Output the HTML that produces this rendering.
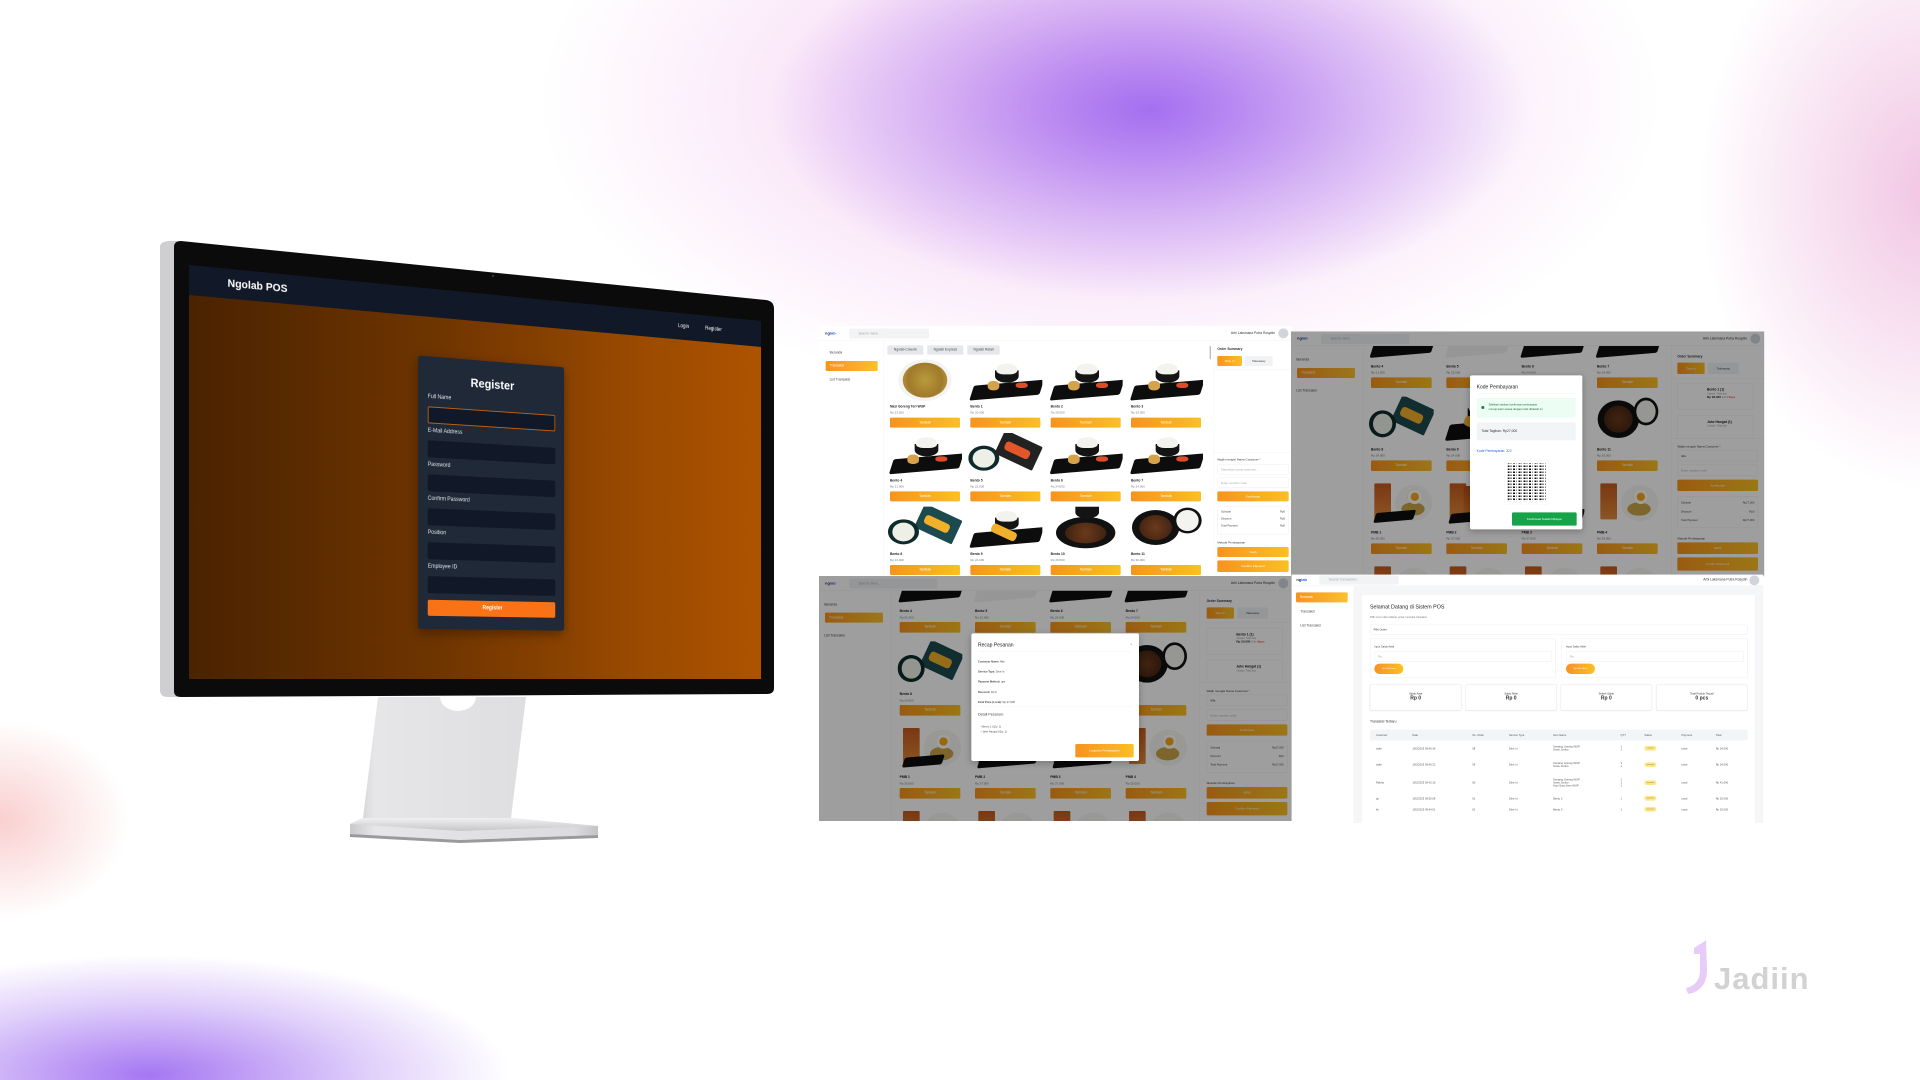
<!DOCTYPE html>
<html><head><meta charset="utf-8">
<style>
*{box-sizing:border-box;margin:0;padding:0}
body{width:1920px;height:1080px;overflow:hidden;background:#fff;position:relative;font-family:"Liberation Sans",sans-serif}
.abs{position:absolute}
.scr{position:absolute;left:189px;top:265px;width:680px;height:414px;perspective:1000px;perspective-origin:0 414px}
.scr .in{position:absolute;left:0;top:0;width:680px;height:414px;transform-origin:0 100%;transform:rotateY(13.3deg);background:linear-gradient(90deg,#4a2300,#6f3500 40%,#9a4a00 75%,#ad5300);overflow:hidden}
.nav{position:absolute;left:0;top:0;width:100%;height:30px;background:#111827;color:#fff}
.form{position:absolute;left:249px;top:72px;width:174px;height:289px;background:#1f2937;border-radius:3px;box-shadow:0 4px 12px rgba(0,0,0,.35)}
.form h2{position:absolute;top:17px;width:100%;text-align:center;color:#fff;font-size:13px;font-weight:bold}
.form .lb{position:absolute;left:11px;color:#e5e7eb;font-size:6px}
.form .ip{position:absolute;left:11px;width:152px;height:18px;background:#111827;border-radius:2px}
.form .bt{position:absolute;left:11px;width:152px;height:17px;top:258px;background:#f97316;border-radius:2px;color:#fff;font-size:6px;font-weight:bold;text-align:center;line-height:17px}
.pnl{position:absolute;width:1425px;height:750px;transform:scale(.33333);transform-origin:0 0;overflow:hidden}
.w{position:absolute;background:#fff;overflow:hidden;font-size:10px;color:#333}
.hd{position:absolute;left:0;top:0;right:0;height:44px;background:#fff;border-bottom:1px solid #eee;z-index:3}
.logo{position:absolute;left:18px;top:14px;font-size:12px;font-weight:bold;color:#1f2937}
.logo b{color:#2563eb}
.srch{position:absolute;left:90px;top:8px;width:240px;height:30px;background:#f1f3f5;border-radius:6px;color:#aaa;font-size:10px;line-height:30px;padding-left:28px}
.usr{position:absolute;right:52px;top:16px;font-size:10px;color:#333}
.av{position:absolute;right:12px;top:7px;width:30px;height:30px;border-radius:50%;background:#d1d5db}
.sb{position:absolute;left:0;top:44px;bottom:0;border-right:1px solid #eee;background:#fff}
.si{position:absolute;left:16px;font-size:10px;color:#444}
.sa{position:absolute;left:20px;height:30px;border-radius:4px;background:linear-gradient(90deg,#f7931e,#fbc02d);color:#fff;font-size:10px;line-height:30px;padding-left:12px}
.og{background:linear-gradient(90deg,#f7931e,#fbbf24);color:#fff;text-align:center;border-radius:4px}
.grid{position:absolute;display:grid}
.card{position:relative}
.card .im{position:absolute;left:0;right:0;top:0;overflow:hidden}
.card .nm{position:absolute;left:6px;font-size:10px;font-weight:bold;color:#222}
.card .pr{position:absolute;left:6px;font-size:9px;color:#777}
.card .bt{position:absolute;left:6px;right:6px;height:30px;line-height:30px;font-size:10px}
.im i{position:absolute;display:block}
.pl{left:6%;right:2%;bottom:8%;height:36%;background:#0d0d0d;transform:skewX(-22deg) rotate(-5deg);border-radius:6px}
.bw{left:36%;width:32%;top:26%;height:30%;background:#141414;border-radius:0 0 50% 50%}
.rc{left:38%;width:28%;top:10%;height:26%;background:#f2f2ee;border-radius:50% 50% 35% 35%}
.f1{left:26%;width:16%;top:52%;height:22%;background:#d6a24a;border-radius:40%}
.f2{left:64%;width:16%;top:56%;height:13%;background:#dc4e2a;border-radius:40%}
.np{left:14%;width:72%;top:0;height:100%;background:#f3f3f1;border-radius:50%}
.ng{left:20%;width:60%;top:8%;height:84%;background:radial-gradient(circle,#b99a3c,#a07a2c 60%,#caa94a);border-radius:50%}
.rb{left:0;width:42%;top:30%;height:60%;background:#0e2a2a;border-radius:50%}
.rr{left:6%;width:30%;top:38%;height:45%;background:#eef0e8;border-radius:50%}
.tl{left:40%;width:56%;top:10%;height:62%;background:#1d4a4e;transform:rotate(25deg);border-radius:4px}
.fy{left:48%;width:36%;top:30%;height:22%;background:#f1b02a;transform:rotate(25deg);border-radius:10px}
.dp{left:4%;width:64%;top:8%;height:84%;background:#111;border-radius:50%}
.dm{left:14%;width:44%;top:20%;height:60%;background:radial-gradient(circle,#6b3a1c,#3a1f10);border-radius:50%}
.dr{left:60%;width:38%;top:2%;height:62%;background:#111;border-radius:50%}
.dw{left:64%;width:30%;top:8%;height:50%;background:#f3f3f0;border-radius:50%}
.gl{left:8%;width:26%;top:8%;height:80%;background:linear-gradient(#c55a1e,#e08a3a);border-radius:3px}
.g2{left:30%;width:22%;top:14%;height:74%;background:linear-gradient(#b84f18,#d97c30);border-radius:3px}
.wp{left:40%;width:58%;top:12%;height:80%;background:#f5f5f3;border-radius:50%}
.eg{left:60%;width:22%;top:22%;height:32%;background:#fff;border-radius:50%;box-shadow:inset 0 0 0 9px #fff,inset 0 0 0 30px #f3a81c}
.ry{left:50%;width:36%;top:50%;height:30%;background:#c9a548;border-radius:50%}
.ov{position:absolute;left:0;top:0;right:0;bottom:0;background:rgba(0,0,0,.38);z-index:5}
.mod{position:absolute;background:#fff;border-radius:6px;z-index:6;box-shadow:0 6px 20px rgba(0,0,0,.25)}
.rp{position:absolute;left:1142px;top:44px;right:0;bottom:0;border-left:1px solid #eee;background:#fff}
.rp .t{position:absolute;font-size:10px;color:#333}
.inp{position:absolute;border:1px solid #e5e7eb;border-radius:4px;background:#fff;color:#aaa;font-size:9px;padding-left:10px}
.gb{background:#f1f2f4;color:#444;text-align:center;border-radius:4px}
.tbl td,.tbl th{font-size:8px;color:#555;text-align:left;font-weight:normal;padding:0 0 0 18px}
.pill{display:inline-block;background:#fde68a;border-radius:8px;width:36px;height:14px;font-size:6px;line-height:14px;text-align:center;color:#8a6d00}
</style></head><body>

<!-- background blobs -->
<div class="abs" style="left:0;top:0;width:1920px;height:1080px;background:
radial-gradient(ellipse 380px 190px at 1150px 110px,rgba(150,95,240,.85),rgba(150,95,240,.35) 55%,rgba(150,95,240,0) 100%),
radial-gradient(ellipse 560px 300px at 1100px 100px,rgba(235,160,230,.55),rgba(235,160,230,0) 100%),
radial-gradient(ellipse 230px 300px at 1930px 190px,rgba(232,160,210,.6),rgba(232,160,210,0) 100%),
radial-gradient(ellipse 360px 120px at 150px 1075px,rgba(150,95,240,.85),rgba(150,95,240,.3) 60%,rgba(150,95,240,0) 100%),
radial-gradient(ellipse 130px 100px at 0px 820px,rgba(245,160,160,.5),rgba(245,160,160,0) 100%)"></div>

<!-- monitor -->
<svg class="abs" style="left:0;top:0" width="1920" height="1080">
<defs>
<linearGradient id="nk" x1="0" x2="1"><stop offset="0" stop-color="#c9c9cb"/><stop offset=".1" stop-color="#e6e6e8"/><stop offset=".9" stop-color="#dcdcde"/><stop offset="1" stop-color="#c4c4c6"/></linearGradient>
<linearGradient id="bs" x1="0" y1="0" x2="0" y2="1"><stop offset="0" stop-color="#f0f0f2"/><stop offset="1" stop-color="#c6c6c8"/></linearGradient>
</defs>
<path d="M378 697 L526 697 L511 818 L598 826 L598 835 L460 840 L350 834 L350 824 L363 818 Z" fill="url(#nk)"/>
<path d="M350 824 L363 818 L511 818 L598 826 L460 831 Z" fill="url(#bs)"/>
<path d="M350 834 L460 840 L598 835 L598 838 L460 843 L350 837Z" fill="#9a9a9c"/>
<path d="M440 697 A18 14 0 0 0 476 697 Z" fill="#fff"/>
<path d="M160 247 Q160 242 168 241 L178 241 L178 697 L168 697 Q160 697 160 690 Z" fill="#cfcfd1"/>
<path d="M174 247 Q174 241 181 241 L766 300 Q774 301 774 309 L774 688 Q774 694 767 694 L181 697 Q174 697 174 691 Z" fill="#0b0b0b"/>
<circle cx="493" cy="276" r="1.2" fill="#333"/>
</svg>
<div class="scr"><div class="in">
 <div class="nav">
  <div class="abs" style="left:40px;top:9px;font-size:11px;font-weight:bold">Ngolab POS</div>
  <div class="abs" style="left:568px;top:12px;font-size:6px">Login</div>
  <div class="abs" style="left:604px;top:12px;font-size:6px">Register</div>
 </div>
 <div class="form">
  <h2>Register</h2>
  <div class="lb" style="top:40px">Full Name</div><div class="ip" style="top:53px;border:1px solid #c2620f"></div>
  <div class="lb" style="top:76px">E-Mail Address</div><div class="ip" style="top:89px"></div>
  <div class="lb" style="top:112px">Password</div><div class="ip" style="top:125px"></div>
  <div class="lb" style="top:148px">Confirm Password</div><div class="ip" style="top:161px"></div>
  <div class="lb" style="top:184px">Position</div><div class="ip" style="top:197px"></div>
  <div class="lb" style="top:220px">Employee ID</div><div class="ip" style="top:233px"></div>
  <div class="bt">Register</div>
 </div>
</div></div>

<!-- PANEL TL -->
<div class="pnl" style="left:818px;top:326px">
<div class="w" style="left:3px;top:0;width:1420px;height:750px">
 <div class="hd"><div class="logo">ng<b>lab</b></div><div class="srch">Search menu...</div><div class="usr">Arbi Laksmana Putra Rosydin</div><div class="av"></div></div>
 <div class="sb" style="width:195px"><div class="si" style="left:32px;top:30px">Beranda</div><div class="sa" style="top:61px;width:156px">Transaksi</div><div class="si" style="left:32px;top:112px">List Transaksi</div></div>
 <div class="gb abs" style="left:205px;top:58px;width:108px;height:28px;line-height:28px;background:#e5e7eb">Ngolab Cowork</div>
 <div class="gb abs" style="left:325px;top:58px;width:108px;height:28px;line-height:28px;background:#e5e7eb">Ngolab Express</div>
 <div class="gb abs" style="left:445px;top:58px;width:97px;height:28px;line-height:28px;background:#e5e7eb">Ngolab Retail</div>
 <div class="grid" style="left:207px;top:100px;grid-template-columns:repeat(4,222px);column-gap:19px;grid-auto-rows:221px">
  <div class="card"><div class="im" style="height:125px"><i class="np"></i><i class="ng"></i></div><div class="nm" style="top:137px">Nasi Goreng Teri WUP</div><div class="pr" style="top:155px">Rp 23.500</div><div class="bt og" style="top:175px">Tambah</div></div>
  <div class="card"><div class="im" style="height:125px"><i class="pl"></i><i class="bw"></i><i class="rc"></i><i class="f1"></i><i class="f2"></i></div><div class="nm" style="top:137px">Bento 1</div><div class="pr" style="top:155px">Rp 20.000</div><div class="bt og" style="top:175px">Tambah</div></div>
  <div class="card"><div class="im" style="height:125px"><i class="pl"></i><i class="bw"></i><i class="rc"></i><i class="f1"></i><i class="f2"></i></div><div class="nm" style="top:137px">Bento 2</div><div class="pr" style="top:155px">Rp 20.000</div><div class="bt og" style="top:175px">Tambah</div></div>
  <div class="card"><div class="im" style="height:125px"><i class="pl"></i><i class="bw"></i><i class="rc"></i><i class="f1"></i><i class="f2"></i></div><div class="nm" style="top:137px">Bento 3</div><div class="pr" style="top:155px">Rp 20.000</div><div class="bt og" style="top:175px">Tambah</div></div>
  <div class="card"><div class="im" style="height:125px"><i class="pl"></i><i class="bw"></i><i class="rc"></i><i class="f1"></i><i class="f2"></i></div><div class="nm" style="top:137px">Bento 4</div><div class="pr" style="top:155px">Rp 21.000</div><div class="bt og" style="top:175px">Tambah</div></div>
  <div class="card"><div class="im" style="height:125px"><i class="rb"></i><i class="rr"></i><i class="tl" style="background:#222"></i><i class="fy" style="background:#e2562a"></i></div><div class="nm" style="top:137px">Bento 5</div><div class="pr" style="top:155px">Rp 22.000</div><div class="bt og" style="top:175px">Tambah</div></div>
  <div class="card"><div class="im" style="height:125px"><i class="pl"></i><i class="bw"></i><i class="rc"></i><i class="f1"></i><i class="f2"></i></div><div class="nm" style="top:137px">Bento 6</div><div class="pr" style="top:155px">Rp 24.000</div><div class="bt og" style="top:175px">Tambah</div></div>
  <div class="card"><div class="im" style="height:125px"><i class="pl"></i><i class="bw"></i><i class="rc"></i><i class="f1"></i><i class="f2"></i></div><div class="nm" style="top:137px">Bento 7</div><div class="pr" style="top:155px">Rp 24.000</div><div class="bt og" style="top:175px">Tambah</div></div>
  <div class="card"><div class="im" style="height:125px"><i class="tl"></i><i class="fy"></i><i class="rb"></i><i class="rr"></i></div><div class="nm" style="top:137px">Bento 8</div><div class="pr" style="top:155px">Rp 24.000</div><div class="bt og" style="top:175px">Tambah</div></div>
  <div class="card"><div class="im" style="height:125px"><i class="pl"></i><i class="bw"></i><i class="rc"></i><i class="fy" style="left:30%;top:50%"></i></div><div class="nm" style="top:137px">Bento 9</div><div class="pr" style="top:155px">Rp 24.000</div><div class="bt og" style="top:175px">Tambah</div></div>
  <div class="card"><div class="im" style="height:125px"><i class="dp" style="left:10%;width:80%;top:25%;height:75%"></i><i class="dm" style="left:22%;width:56%;top:38%;height:50%"></i><i class="bw" style="top:0;height:28%"></i></div><div class="nm" style="top:137px">Bento 10</div><div class="pr" style="top:155px">Rp 26.500</div><div class="bt og" style="top:175px">Tambah</div></div>
  <div class="card"><div class="im" style="height:125px"><i class="dp"></i><i class="dm"></i><i class="dr"></i><i class="dw"></i></div><div class="nm" style="top:137px">Bento 11</div><div class="pr" style="top:155px">Rp 30.000</div><div class="bt og" style="top:175px">Tambah</div></div>
 </div>
 <div class="abs" style="left:1172px;top:60px;width:4px;height:40px;background:#bbb;border-radius:2px"></div>
 <div class="rp" style="left:1182px">
  <div class="t" style="left:12px;top:20px;font-weight:bold">Order Summary</div>
  <div class="abs og" style="left:12px;top:46px;width:74px;height:30px;line-height:30px;font-size:9px">Dine In</div>
  <div class="abs gb" style="left:94px;top:46px;width:84px;height:30px;line-height:30px;font-size:9px">Takeaway</div>
  <div class="abs" style="left:0;right:0;top:86px;border-top:1px solid #eee"></div>
  <div class="abs" style="left:0;right:0;top:336px;border-top:1px solid #eee"></div>
  <div class="t" style="left:12px;top:352px;font-size:9px">Wajib mengisi Nama Customer <span style="color:#e11">*</span></div>
  <div class="inp" style="left:12px;top:371px;width:214px;height:30px;line-height:30px">Masukkan nama customer...</div>
  <div class="inp" style="left:12px;top:411px;width:214px;height:30px;line-height:30px">Enter voucher code</div>
  <div class="abs og" style="left:12px;top:452px;width:214px;height:30px;line-height:30px;font-size:9px">Konfirmasi</div>
  <div class="inp" style="left:12px;top:496px;width:214px;height:85px;color:#444;font-size:8px;line-height:21px;padding:6px 10px">Subtotal<span style="float:right">Rp0</span><br>Discount<span style="float:right">Rp0</span><br>Total Payment<span style="float:right">Rp0</span></div>
  <div class="t" style="left:12px;top:600px;font-size:9px">Metode Pembayaran</div>
  <div class="abs og" style="left:12px;top:619px;width:214px;height:30px;line-height:30px;font-size:9px">Cash</div>
  <div class="abs og" style="left:12px;top:659px;width:214px;height:35px;line-height:35px;font-size:9px">Confirm Payment</div>
 </div>
</div></div>

<!-- PANEL TR -->
<div class="pnl" style="left:1290px;top:328px">
<div class="w" style="left:3px;top:10px;width:1420px;height:735px">
 <div class="hd"><div class="logo">ng<b>lab</b></div><div class="srch" style="width:265px">Search menu...</div><div class="usr">Arbi Laksmana Putra Rosydin</div><div class="av"></div></div>
 <div class="sb" style="width:218px"><div class="si" style="top:36px">Beranda</div><div class="sa" style="left:18px;top:66px;width:174px">Transaksi</div><div class="si" style="top:129px">List Transaksi</div></div>
 <div class="grid" style="left:234px;top:-53px;grid-template-columns:repeat(4,194px);column-gap:32px;grid-auto-rows:249px">
  <div class="card"><div class="im" style="height:135px"><i class="pl"></i></div><div class="nm" style="top:153px">Bento 4</div><div class="pr" style="top:172px">Rp 21.000</div><div class="bt og" style="top:191px;height:32px">Tambah</div></div>
  <div class="card"><div class="im" style="height:135px"><i class="pl" style="background:#f3f3f3"></i></div><div class="nm" style="top:153px">Bento 5</div><div class="pr" style="top:172px">Rp 22.000</div><div class="bt og" style="top:191px;height:32px">Tambah</div></div>
  <div class="card"><div class="im" style="height:135px"><i class="pl"></i></div><div class="nm" style="top:153px">Bento 6</div><div class="pr" style="top:172px">Rp 24.000</div><div class="bt og" style="top:191px;height:32px">Tambah</div></div>
  <div class="card"><div class="im" style="height:135px"><i class="pl"></i></div><div class="nm" style="top:153px">Bento 7</div><div class="pr" style="top:172px">Rp 24.000</div><div class="bt og" style="top:191px;height:32px">Tambah</div></div>
  <div class="card"><div class="im" style="height:135px"><i class="tl"></i><i class="fy"></i><i class="rb"></i><i class="rr"></i></div><div class="nm" style="top:153px">Bento 8</div><div class="pr" style="top:172px">Rp 24.000</div><div class="bt og" style="top:191px;height:32px">Tambah</div></div>
  <div class="card"><div class="im" style="height:135px"><i class="pl"></i><i class="bw"></i><i class="rc"></i><i class="fy" style="left:30%;top:50%"></i></div><div class="nm" style="top:153px">Bento 9</div><div class="pr" style="top:172px">Rp 24.000</div><div class="bt og" style="top:191px;height:32px">Tambah</div></div>
  <div class="card"><div class="im" style="height:135px"><i class="dp" style="left:10%;width:80%;top:25%;height:75%"></i><i class="dm" style="left:22%;width:56%;top:38%;height:50%"></i></div><div class="nm" style="top:153px">Bento 10</div><div class="pr" style="top:172px">Rp 26.500</div><div class="bt og" style="top:191px;height:32px">Tambah</div></div>
  <div class="card"><div class="im" style="height:135px"><i class="dp"></i><i class="dm"></i><i class="dr"></i><i class="dw"></i></div><div class="nm" style="top:153px">Bento 11</div><div class="pr" style="top:172px">Rp 30.000</div><div class="bt og" style="top:191px;height:32px">Tambah</div></div>
  <div class="card"><div class="im" style="height:135px"><i class="gl"></i><i class="wp"></i><i class="ry"></i><i class="eg"></i><i class="pl" style="height:22%;left:10%;right:30%"></i></div><div class="nm" style="top:153px">PMB 1</div><div class="pr" style="top:172px">Rp 35.000</div><div class="bt og" style="top:191px;height:32px">Tambah</div></div>
  <div class="card"><div class="im" style="height:135px"><i class="gl"></i><i class="g2"></i><i class="pl" style="height:22%;left:10%"></i></div><div class="nm" style="top:153px">PMB 2</div><div class="pr" style="top:172px">Rp 37.000</div><div class="bt og" style="top:191px;height:32px">Tambah</div></div>
  <div class="card"><div class="im" style="height:135px"><i class="gl"></i><i class="g2"></i><i class="pl" style="height:22%;left:10%"></i></div><div class="nm" style="top:153px">PMB 3</div><div class="pr" style="top:172px">Rp 37.000</div><div class="bt og" style="top:191px;height:32px">Tambah</div></div>
  <div class="card"><div class="im" style="height:135px"><i class="gl"></i><i class="wp"></i><i class="ry"></i><i class="eg"></i></div><div class="nm" style="top:153px">PMB 4</div><div class="pr" style="top:172px">Rp 35.000</div><div class="bt og" style="top:191px;height:32px">Tambah</div></div>
  <div class="card"><div class="im" style="height:135px"><i class="gl"></i><i class="wp"></i></div></div>
  <div class="card"><div class="im" style="height:135px"><i class="gl"></i><i class="wp"></i></div></div>
  <div class="card"><div class="im" style="height:135px"><i class="gl"></i><i class="wp"></i></div></div>
  <div class="card"><div class="im" style="height:135px"><i class="gl"></i><i class="wp"></i></div></div>
 </div>
 <div class="rp">
  <div class="t" style="left:16px;top:26px;font-weight:bold">Order Summary</div>
  <div class="abs og" style="left:16px;top:50px;width:82px;height:34px;line-height:34px;font-size:9px">Dine In</div>
  <div class="abs gb" style="left:108px;top:50px;width:92px;height:34px;line-height:34px;font-size:9px">Takeaway</div>
  <div class="abs" style="left:0;right:0;top:96px;border-top:1px solid #eee"></div>
  <div class="inp" style="left:16px;top:111px;width:228px;height:80px;color:#222;font-size:10px;padding:14px 0 0 88px"><b>Bento 1 (1)</b><br><span style="font-size:7px;color:#999">Catatan: Tidak ada</span><br><b style="font-size:9px">Rp 20,000</b> <span style="font-size:8px;color:#999">Edit</span> <span style="font-size:8px;color:#e11">Hapus</span></div>
  <div class="inp" style="left:16px;top:208px;width:228px;height:70px;color:#222;font-size:10px;padding:14px 0 0 88px"><b>Jahe Hangat (1)</b><br><span style="font-size:7px;color:#999">Catatan: Tidak ada</span></div>
  <div class="abs" style="left:0;right:0;top:276px;bottom:0;background:#fff;border-top:1px solid #eee"></div>
  <div class="t" style="left:16px;top:296px;font-size:9px">Wajib mengisi Nama Customer <span style="color:#e11">*</span></div>
  <div class="inp" style="left:16px;top:312px;width:242px;height:34px;line-height:34px;color:#333">Ikfa</div>
  <div class="inp" style="left:16px;top:356px;width:242px;height:34px;line-height:34px">Enter voucher code</div>
  <div class="abs og" style="left:16px;top:401px;width:242px;height:34px;line-height:34px;font-size:9px">Konfirmasi</div>
  <div class="inp" style="left:16px;top:451px;width:242px;height:95px;color:#444;font-size:8px;line-height:26px;padding:6px 10px">Subtotal<span style="float:right">Rp27,000</span><br>Discount<span style="float:right">Rp0</span><br>Total Payment<span style="float:right">Rp27,000</span></div>
  <div class="t" style="left:16px;top:572px;font-size:9px">Metode Pembayaran</div>
  <div class="abs og" style="left:16px;top:589px;width:242px;height:35px;line-height:35px;font-size:9px">QRIS</div>
  <div class="abs og" style="left:16px;top:634px;width:242px;height:40px;line-height:40px;font-size:9px">Confirm Payment</div>
 </div>
 <div class="ov"></div>
 <div class="mod" style="left:537px;top:132px;width:337px;height:462px">
  <div class="abs" style="left:20px;top:26px;font-size:15px;color:#222">Kode Pembayaran</div>
  <div class="abs" style="left:20px;right:20px;top:54px;border-top:1px solid #eee"></div>
  <div class="abs" style="left:20px;right:20px;top:68px;height:60px;background:#ecfdf3;border-radius:4px;font-size:8px;color:#166534;padding:14px 0 0 36px;line-height:13px">Silahkan lakukan konfirmasi pembayaran<br>menuju kasir sesuai dengan kode dibawah ini<i style="position:absolute;left:14px;top:24px;width:9px;height:9px;border-radius:50%;background:#15803d"></i></div>
  <div class="abs" style="left:20px;right:20px;top:141px;height:54px;background:#f3f4f6;border-radius:4px;font-size:10px;color:#333;line-height:54px;padding-left:14px">Total Tagihan: Rp27,000</div>
  <div class="abs" style="left:20px;top:222px;font-size:10px;color:#2563eb">Kode Pembayaran: 322</div>
  <div class="abs" style="left:105px;top:256px;width:130px;height:130px;background:repeating-linear-gradient(90deg,#111 0 6px,#fff 6px 9px,#111 9px 11px,#fff 11px 16px),repeating-linear-gradient(0deg,#fff 0 4px,transparent 4px 9px);background-blend-mode:lighten;border:8px solid #fff;outline:1px solid #eee"></div>
  <div class="abs" style="left:126px;top:411px;width:194px;height:40px;background:#16a34a;border-radius:4px;color:#fff;font-size:9px;text-align:center;line-height:40px">Konfirmasi Sudah Dibayar</div>
 </div>
</div></div>

<!-- PANEL BL -->
<div class="pnl" style="left:818px;top:573px">
<div class="w" style="left:3px;top:9px;width:1420px;height:735px">
 <div class="hd"><div class="logo">ng<b>lab</b></div><div class="srch" style="width:265px">Search menu...</div><div class="usr">Arbi Laksmana Putra Rosydin</div><div class="av"></div></div>
 <div class="sb" style="width:218px"><div class="si" style="top:36px">Beranda</div><div class="sa" style="left:18px;top:66px;width:174px">Transaksi</div><div class="si" style="top:129px">List Transaksi</div></div>
 <div class="grid" style="left:236px;top:-53px;grid-template-columns:repeat(4,194px);column-gap:32px;grid-auto-rows:249px">
  <div class="card"><div class="im" style="height:135px"><i class="pl"></i></div><div class="nm" style="top:153px">Bento 4</div><div class="pr" style="top:172px">Rp 21.000</div><div class="bt og" style="top:191px;height:32px">Tambah</div></div>
  <div class="card"><div class="im" style="height:135px"><i class="pl" style="background:#f3f3f3"></i></div><div class="nm" style="top:153px">Bento 5</div><div class="pr" style="top:172px">Rp 22.000</div><div class="bt og" style="top:191px;height:32px">Tambah</div></div>
  <div class="card"><div class="im" style="height:135px"><i class="pl"></i></div><div class="nm" style="top:153px">Bento 6</div><div class="pr" style="top:172px">Rp 24.000</div><div class="bt og" style="top:191px;height:32px">Tambah</div></div>
  <div class="card"><div class="im" style="height:135px"><i class="pl"></i></div><div class="nm" style="top:153px">Bento 7</div><div class="pr" style="top:172px">Rp 24.000</div><div class="bt og" style="top:191px;height:32px">Tambah</div></div>
  <div class="card"><div class="im" style="height:135px"><i class="tl"></i><i class="fy"></i><i class="rb"></i><i class="rr"></i></div><div class="nm" style="top:153px">Bento 8</div><div class="pr" style="top:172px">Rp 24.000</div><div class="bt og" style="top:191px;height:32px">Tambah</div></div>
  <div class="card"><div class="im" style="height:135px"><i class="pl"></i></div><div class="nm" style="top:153px">Bento 9</div><div class="pr" style="top:172px">Rp 24.000</div><div class="bt og" style="top:191px;height:32px">Tambah</div></div>
  <div class="card"><div class="im" style="height:135px"><i class="dp"></i></div><div class="nm" style="top:153px">Bento 10</div><div class="pr" style="top:172px">Rp 26.500</div><div class="bt og" style="top:191px;height:32px">Tambah</div></div>
  <div class="card"><div class="im" style="height:135px"><i class="dp"></i><i class="dm"></i><i class="dr"></i><i class="dw"></i></div><div class="nm" style="top:153px">Bento 11</div><div class="pr" style="top:172px">Rp 30.000</div><div class="bt og" style="top:191px;height:32px">Tambah</div></div>
  <div class="card"><div class="im" style="height:135px"><i class="gl"></i><i class="wp"></i><i class="ry"></i><i class="eg"></i><i class="pl" style="height:22%;left:10%;right:30%"></i></div><div class="nm" style="top:153px">PMB 1</div><div class="pr" style="top:172px">Rp 35.000</div><div class="bt og" style="top:191px;height:32px">Tambah</div></div>
  <div class="card"><div class="im" style="height:135px"><i class="gl"></i><i class="g2"></i><i class="pl" style="height:22%;left:10%"></i></div><div class="nm" style="top:153px">PMB 2</div><div class="pr" style="top:172px">Rp 37.000</div><div class="bt og" style="top:191px;height:32px">Tambah</div></div>
  <div class="card"><div class="im" style="height:135px"><i class="gl"></i><i class="g2"></i><i class="pl" style="height:22%;left:10%"></i></div><div class="nm" style="top:153px">PMB 3</div><div class="pr" style="top:172px">Rp 37.000</div><div class="bt og" style="top:191px;height:32px">Tambah</div></div>
  <div class="card"><div class="im" style="height:135px"><i class="gl"></i><i class="wp"></i><i class="ry"></i><i class="eg"></i></div><div class="nm" style="top:153px">PMB 4</div><div class="pr" style="top:172px">Rp 35.000</div><div class="bt og" style="top:191px;height:32px">Tambah</div></div>
  <div class="card"><div class="im" style="height:135px"><i class="gl"></i><i class="wp"></i></div></div>
  <div class="card"><div class="im" style="height:135px"><i class="gl"></i><i class="wp"></i></div></div>
  <div class="card"><div class="im" style="height:135px"><i class="gl"></i><i class="wp"></i></div></div>
  <div class="card"><div class="im" style="height:135px"><i class="gl"></i><i class="wp"></i></div></div>
 </div>
 <div class="rp">
  <div class="t" style="left:20px;top:26px;font-weight:bold">Order Summary</div>
  <div class="abs og" style="left:20px;top:50px;width:82px;height:34px;line-height:34px;font-size:9px">Dine In</div>
  <div class="abs gb" style="left:112px;top:50px;width:92px;height:34px;line-height:34px;font-size:9px">Takeaway</div>
  <div class="abs" style="left:0;right:0;top:96px;border-top:1px solid #eee"></div>
  <div class="inp" style="left:20px;top:111px;width:228px;height:80px;color:#222;font-size:10px;padding:14px 0 0 88px"><b>Bento 1 (1)</b><br><span style="font-size:7px;color:#999">Catatan: Tidak ada</span><br><b style="font-size:9px">Rp 20,000</b> <span style="font-size:8px;color:#999">Edit</span> <span style="font-size:8px;color:#e11">Hapus</span></div>
  <div class="inp" style="left:20px;top:208px;width:228px;height:70px;color:#222;font-size:10px;padding:14px 0 0 88px"><b>Jahe Hangat (1)</b><br><span style="font-size:7px;color:#999">Catatan: Tidak ada</span></div>
  <div class="abs" style="left:0;right:0;top:276px;bottom:0;background:#fff;border-top:1px solid #eee"></div>
  <div class="t" style="left:20px;top:296px;font-size:9px">Wajib mengisi Nama Customer <span style="color:#e11">*</span></div>
  <div class="inp" style="left:20px;top:312px;width:242px;height:34px;line-height:34px;color:#333">Mfa</div>
  <div class="inp" style="left:20px;top:356px;width:242px;height:34px;line-height:34px">Enter voucher code</div>
  <div class="abs og" style="left:20px;top:401px;width:242px;height:34px;line-height:34px;font-size:9px">Konfirmasi</div>
  <div class="inp" style="left:20px;top:451px;width:242px;height:95px;color:#444;font-size:8px;line-height:26px;padding:6px 10px">Subtotal<span style="float:right">Rp27,000</span><br>Discount<span style="float:right">Rp0</span><br>Total Payment<span style="float:right">Rp27,000</span></div>
  <div class="t" style="left:20px;top:572px;font-size:9px">Metode Pembayaran</div>
  <div class="abs og" style="left:20px;top:589px;width:242px;height:35px;line-height:35px;font-size:9px">QRIS</div>
  <div class="abs og" style="left:20px;top:634px;width:242px;height:40px;line-height:40px;font-size:9px">Confirm Payment</div>
 </div>
 <div class="ov"></div>
 <div class="mod" style="left:457px;top:172px;width:503px;height:383px">
  <div class="abs" style="left:20px;top:26px;font-size:15px;color:#222">Recap Pesanan</div>
  <div class="abs" style="right:20px;top:28px;font-size:10px;color:#999">×</div>
  <div class="abs" style="left:20px;right:20px;top:54px;border-top:1px solid #eee"></div>
  <div class="abs" style="left:20px;top:70px;font-size:8px;color:#444;line-height:30.5px"><b>Customer Name:</b> Mfa<br><b>Service Type:</b> Dine In<br><b>Payment Method:</b> qris<br><b>Discount:</b> Rp 0<br><b>Final Price (Local):</b> Rp 27,000</div>
  <div class="abs" style="left:20px;right:20px;top:218px;border-top:1px solid #eee"></div>
  <div class="abs" style="left:20px;top:238px;font-size:11px;color:#444">Detail Pesanan:</div>
  <div class="abs" style="left:28px;top:272px;font-size:8px;color:#555;line-height:16px">• Bento 1 (Qty: 1)<br>• Jahe Hangat (Qty: 1)</div>
  <div class="abs og" style="left:312px;top:332px;width:175px;height:40px;line-height:40px;font-size:9px">Lanjut ke Pembayaran</div>
 </div>
</div></div>

<!-- PANEL BR -->
<div class="pnl" style="left:1290px;top:573px">
<div class="w" style="left:5px;top:5px;width:1415px;height:745px;background:#f5f6f8">
 <div class="hd" style="height:34px"><div class="logo" style="left:14px;top:8px">ng<b>lab</b></div><div class="srch" style="left:83px;top:2px;width:238px;height:28px;line-height:28px">Search transaction...</div><div class="usr" style="top:10px;right:48px">Arbi Laksmana Putra Rosydin</div><div class="av" style="top:2px"></div></div>
 <div class="sb" style="top:34px;width:187px"><div class="sa" style="left:13px;top:19px;width:155px">Beranda</div><div class="si" style="left:26px;top:72px">Transaksi</div><div class="si" style="left:26px;top:114px">List Transaksi</div></div>
 <div class="abs" style="left:210px;top:60px;width:1180px;height:700px;background:#fff;border-radius:6px;box-shadow:0 1px 3px rgba(0,0,0,.06)">
  <div class="abs" style="left:25px;top:28px;font-size:16px;color:#222">Selamat Datang di Sistem POS</div>
  <div class="abs" style="left:25px;top:63px;font-size:8px;color:#777">Pilih menu dari sidebar untuk memulai transaksi.</div>
  <div class="inp" style="left:25px;top:90px;width:1133px;height:30px;line-height:30px;color:#333;font-size:8px">Pilih Outlet</div>
  <div class="inp" style="left:25px;top:132px;width:557px;height:118px"><div class="abs" style="left:12px;top:18px;font-size:8px;color:#444">Input Saldo Awal</div><div class="inp" style="left:12px;top:36px;width:533px;height:32px;line-height:32px">Rp</div><div class="abs og" style="left:12px;top:74px;width:87px;height:31px;line-height:31px;border-radius:16px;font-size:6px">Set Saldo Awal</div></div>
  <div class="inp" style="left:600px;top:132px;width:558px;height:118px"><div class="abs" style="left:12px;top:18px;font-size:8px;color:#444">Input Saldo Akhir</div><div class="inp" style="left:12px;top:36px;width:533px;height:32px;line-height:32px">Rp</div><div class="abs og" style="left:12px;top:74px;width:87px;height:31px;line-height:31px;border-radius:16px;font-size:6px">Set Saldo Akhir</div></div>
  <div class="inp" style="left:25px;top:270px;width:274px;height:77px;text-align:center;color:#333;padding:22px 0 0;font-size:8px;box-shadow:0 1px 3px rgba(0,0,0,.08)">Saldo Awal<br><b style="font-size:15px">Rp 0</b></div>
  <div class="inp" style="left:312px;top:270px;width:273px;height:77px;text-align:center;color:#333;padding:22px 0 0;font-size:8px;box-shadow:0 1px 3px rgba(0,0,0,.08)">Saldo Akhir<br><b style="font-size:15px">Rp 0</b></div>
  <div class="inp" style="left:597px;top:270px;width:274px;height:77px;text-align:center;color:#333;padding:22px 0 0;font-size:8px;box-shadow:0 1px 3px rgba(0,0,0,.08)">Selisih Saldo<br><b style="font-size:15px">Rp 0</b></div>
  <div class="inp" style="left:884px;top:270px;width:273px;height:77px;text-align:center;color:#333;padding:22px 0 0;font-size:8px;box-shadow:0 1px 3px rgba(0,0,0,.08)">Total Produk Terjual<br><b style="font-size:15px">0 pcs</b></div>
  <div class="abs" style="left:25px;top:376px;font-size:10px;color:#333">Transaksi Terbaru</div>
  <div class="abs" style="left:25px;top:405px;width:1133px;height:32px;background:#f3f4f6"></div>
  <table class="tbl abs" style="left:25px;top:405px;width:1133px;border-collapse:collapse">
   <tr style="height:32px"><th>Customer</th><th>Date</th><th>No. Order</th><th>Service Type</th><th>Item Name</th><th>QTY</th><th>Status</th><th>Payment</th><th>Total</th></tr>
   <tr style="height:48px"><td>saka</td><td>15/2/2025 09:40:35</td><td>58</td><td>Dine In</td><td>Kentang Goreng WUP<br>Sosis Jumbo</td><td>1<br>1</td><td><span class="pill">cancel</span></td><td>tunai</td><td>Rp 34.000</td></tr>
   <tr style="height:50px"><td>saka</td><td>15/2/2025 09:40:21</td><td>59</td><td>Dine In</td><td>Kentang Goreng WUP<br>Sosis Jumbo</td><td>1<br>1</td><td><span class="pill">success</span></td><td>tunai</td><td>Rp 34.000</td></tr>
   <tr style="height:58px"><td>Rabha</td><td>15/2/2025 09:42:15</td><td>60</td><td>Dine In</td><td>Kentang Goreng WUP<br>Sosis Jumbo<br>Kopi Susu Aren WUP</td><td>1<br>1<br>1</td><td><span class="pill">success</span></td><td>tunai</td><td>Rp 41.000</td></tr>
   <tr style="height:36px"><td>pp</td><td>15/2/2025 09:50:08</td><td>61</td><td>Dine In</td><td>Bento 3</td><td>1</td><td><span class="pill">success</span></td><td>tunai</td><td>Rp 20.000</td></tr>
   <tr style="height:30px"><td>kk</td><td>15/2/2025 09:44:01</td><td>62</td><td>Dine In</td><td>Bento 3</td><td>1</td><td><span class="pill">success</span></td><td>tunai</td><td>Rp 20.000</td></tr>
  </table>
 </div>
</div></div>

<!-- Jadiin logo -->
<svg class="abs" style="left:1682px;top:940px" width="40" height="60"><path d="M12 8 C18 4 22 2 24 0 L25 30 C25 44 18 52 6 54 L4 48 C13 46 18 40 18 30 L18 14 L12 14 Z" fill="#e8ccf8"/></svg>
<div class="abs" style="left:1714px;top:961px;font-size:31px;font-weight:bold;color:#d2d2d2;letter-spacing:1px">Jadiin</div>
</body></html>
